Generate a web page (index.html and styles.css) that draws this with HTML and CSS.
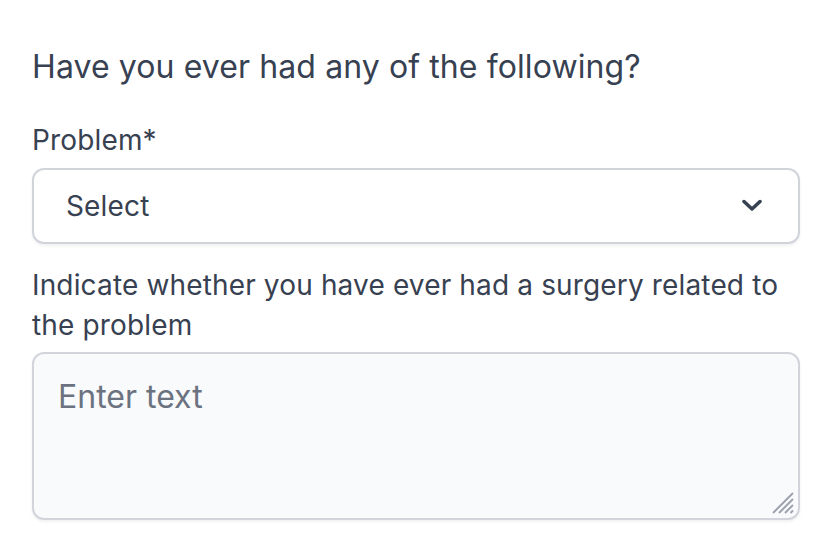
FILE: index.html
```html
<!DOCTYPE html>
<html lang="en">
  <head>
    <meta charset="UTF-8" />
    <title>Medical history</title>
    <link rel="stylesheet" href="styles.css">
  </head>
  <body>
    <form class="history-form" onsubmit="event.preventDefault();">
      <h2 class="history-title">Have you ever had any of the following?</h2>

      <label class="field-label" for="problem">Problem*</label>
      <div class="select-wrap">
        <select id="problem" class="field-select" required>
          <option value="">Select</option>
        </select>
        <svg class="select-chevron" viewBox="0 0 22 12" aria-hidden="true">
          <path d="M3 2.5L11 10L19 2.5" fill="none" stroke="currentColor" stroke-width="3.5" stroke-linecap="round" stroke-linejoin="round" />
        </svg>
      </div>

      <label class="field-label field-label--spaced" for="surgery">
        Indicate whether you have ever had a surgery related to the problem
      </label>
      <div class="textarea-wrap">
        <textarea id="surgery" class="field-textarea" placeholder="Enter text"></textarea>
        <svg class="resize-grip" viewBox="0 0 24 24" aria-hidden="true">
          <path d="M22 2L2 22M22 8L8 22M22 14L14 22M22 19.5L19.5 22" stroke="currentColor" stroke-width="2" />
        </svg>
      </div>
    </form>
  </body>
</html>
```

FILE: styles.css
```css
:root {
  --text: #374151;
  --muted: #6b7280;
  --border: #d1d5db;
  --field-bg: #f9fafb;
}

html,
body {
  margin: 0;
  background: #fff;
  font-family: Inter, "Noto Sans", Arial, sans-serif;
  color: var(--text);
}

.history-form {
  display: flex;
  flex-direction: column;
  padding: 43px 32px 32px 32px;
}

.history-title {
  margin: 0 0 29px 0;
  font-size: 32px;
  font-weight: 400;
  line-height: 48px;
  letter-spacing: 0.1px;
}

.field-label {
  font-size: 28px;
  line-height: 40px;
  letter-spacing: 0.15px;
  margin-bottom: 8px;
}

.field-label--spaced {
  margin-top: 21px;
  margin-bottom: 7px;
}

.select-wrap,
.textarea-wrap {
  position: relative;
}

.field-select {
  display: block;
  box-sizing: border-box;
  width: 100%;
  height: 76px;
  appearance: none;
  -webkit-appearance: none;
  border: 2px solid var(--border);
  border-radius: 12px;
  background: #fff;
  box-shadow: 0 2px 3px rgba(0, 0, 0, 0.06);
  padding: 0 64px 0 32px;
  font-family: inherit;
  font-size: 28px;
  letter-spacing: 0.15px;
  color: var(--text);
}

.select-chevron {
  position: absolute;
  right: 37px;
  top: 31px;
  width: 22px;
  height: 12px;
  color: var(--text);
  pointer-events: none;
}

.field-textarea {
  display: block;
  box-sizing: border-box;
  width: 100%;
  height: 168px;
  resize: none;
  border: 2px solid var(--border);
  border-radius: 12px;
  background: var(--field-bg);
  box-shadow: 0 2px 3px rgba(0, 0, 0, 0.06);
  padding: 23px 24px;
  font-family: inherit;
  font-size: 32px;
  line-height: 40px;
  color: var(--text);
}

.field-textarea::placeholder {
  color: var(--muted);
}

.resize-grip {
  position: absolute;
  right: 5px;
  bottom: 5px;
  width: 24px;
  height: 24px;
  color: #9ca3af;
  pointer-events: none;
}
```
